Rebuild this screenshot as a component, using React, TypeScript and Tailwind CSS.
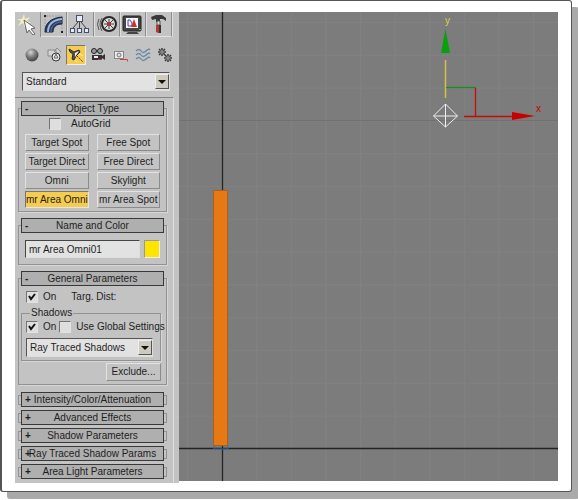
import React from "react";

const lightTypes = [
  "Target Spot",
  "Free Spot",
  "Target Direct",
  "Free Direct",
  "Omni",
  "Skylight",
  "mr Area Omni",
  "mr Area Spot",
];

const closedRollouts = [
  "Intensity/Color/Attenuation",
  "Advanced Effects",
  "Shadow Parameters",
  "Ray Traced Shadow Params",
  "Area Light Parameters",
];

const tabs = [
  {
    name: "Create",
    icon: (
      <>
        <path d="M7 0 8 5 13 3 10 7 14 9 9 9 8 14 6 9 1 12 4 7 0 5 5 5Z" fill="#f3efc2" />
        <path d="M7 6 18 14 14 15 18 20 16 21 12 16 10 19Z" fill="#fafafa" stroke="#666" strokeWidth="1" />
      </>
    ),
  },
  {
    name: "Modify",
    icon: (
      <>
        <path d="M2 19V2H19V19" fill="none" stroke="#999" strokeWidth="1" strokeDasharray="2 1" />
        <path d="M2 18C2 9 8 4 19 3V10C13 10 10 13 10 18Z" fill="#2b3f63" stroke="#1b263b" />
        <path d="M5 18C5 10 10 6 19 5" fill="none" stroke="#9db7de" strokeWidth="2" />
        <path d="M8 18C8 12 12 8 19 8" fill="none" stroke="#5877aa" />
        <path d="M1 1h2v2H1zM18 17h2v2h-2z" fill="#222" />
      </>
    ),
  },
  {
    name: "Hierarchy",
    icon: (
      <>
        <path d="M10.500 8V14M9 8 4 14M12 8 17 14" stroke="#444" strokeWidth="1" />
        <g fill="#e8ebf6" stroke="#46506e">
          <rect x="7.500" y="1.500" width="6" height="6" />
          <rect x="1.500" y="14.500" width="4" height="4" />
          <rect x="8.500" y="14.500" width="4" height="4" />
          <rect x="15.500" y="14.500" width="4" height="4" />
        </g>
      </>
    ),
  },
  {
    name: "Motion",
    icon: (
      <>
        <path d="M3 5Q0 10 3 16M6 4Q2 10 6 17" fill="none" stroke="#555" />
        <circle cx="13" cy="10" r="7" fill="#ddd" stroke="#292929" strokeWidth="2" />
        <path d="M13 5V15M8 10H18M9 6 17 14M17 6 9 14" stroke="#444" strokeWidth="1" />
        <circle cx="13" cy="10" r="2" fill="#a82f2f" />
      </>
    ),
  },
  {
    name: "Display",
    icon: (
      <>
        <rect x="1" y="2" width="18" height="15" rx="1" fill="#454545" stroke="#222" />
        <rect x="4" y="4" width="12" height="10" fill="#f5f5ff" />
        <path d="M6 6h2l2 3v3H6Z" fill="none" stroke="#3a4b9b" />
        <path d="M12 5 15 13H9Z" fill="#d43030" />
        <path d="M6 18h9l2 2H4Z" fill="#444" />
        <path d="M17 15h2v1h-2z" fill="#36cc55" />
      </>
    ),
  },
  {
    name: "Utilities",
    icon: (
      <>
        <path d="M3 3 8 1H14L18 4V7L15 5H12V8H8V5L4 6Z" fill="#383838" />
        <path d="M9 7h3v4H9z" fill="#ddd" stroke="#555" strokeWidth="1" />
        <path d="M8 11h5v7q-2 2-5 0Z" fill="#b2392d" />
        <path d="M11 11h2v8h-2z" fill="#333" />
      </>
    ),
  },
];

const categories = [
  {
    name: "Geometry",
    icon: (
      <>
        <defs>
          <radialGradient id="ball" cx="40%" cy="30%" r="65%">
            <stop offset="0" stopColor="#d5d5d5" />
            <stop offset=".5" stopColor="#858585" />
            <stop offset="1" stopColor="#494949" />
          </radialGradient>
        </defs>
        <circle cx="8" cy="8" r="6.500" fill="url(#ball)" />
      </>
    ),
  },
  {
    name: "Shapes",
    icon: (
      <>
        <path d="M2 3h8v6H2zM8 5 11 1 15 5" fill="#d5d5d5" stroke="#888" />
        <circle cx="10" cy="10" r="4" fill="#eee" stroke="#333" />
        <path d="m10 7 2 4H8Z" fill="#ddd" stroke="#666" strokeWidth="1" />
      </>
    ),
  },
  {
    name: "Lights",
    icon: (
      <>
        <path d="M10 6l5 3M5 10l4 5" stroke="#fff2ac" strokeWidth="1" />
        <path d="M1 2 6 5 11 3 12 5 8 9 6 13 4 12 5 7 2 5Z" fill="#555" stroke="#2b2b2b" />
        <path d="m7 6 4-2-4 6Z" fill="#f7f7e4" />
        <path d="m9 9 6 6" stroke="#444" strokeDasharray="2 1" />
      </>
    ),
  },
  {
    name: "Cameras",
    icon: (
      <>
        <circle cx="4" cy="4" r="2.500" fill="#999" stroke="#222" />
        <circle cx="10" cy="4" r="2.500" fill="#999" stroke="#222" />
        <path d="M2 8h10v5H2zM12 9l3-2v6l-3-2Z" fill="#333" />
        <path d="M4 9h4v2H4z" fill="#eee" />
        <path d="M8 12h4v1H8z" fill="#b73535" />
      </>
    ),
  },
  {
    name: "Helpers",
    icon: (
      <>
        <rect x="1.500" y="4.500" width="9" height="7" fill="#eee" stroke="#858585" />
        <circle cx="6" cy="8" r="2" fill="#ddd" stroke="#777" />
        <path d="M7 12.500h7.500v2" fill="none" stroke="#c94343" />
      </>
    ),
  },
  {
    name: "Space Warps",
    icon: (
      <path
        d="M1 4q3-3 5 0t5 0 4-1M1 8q3-3 5 0t5 0 4-1M1 12q3-3 5 0t5 0 4-1"
        fill="none"
        stroke="#6b87a3"
        strokeWidth="1.300"
      />
    ),
  },
  {
    name: "Systems",
    icon: (
      <>
        <g stroke="#383838" strokeWidth="1.500">
          <path d="M5 1v8M1 5h8M2 2l6 6M8 2 2 8" />
          <path d="M11 7v8M7 11h8M8 8l6 6M14 8l-6 6" />
        </g>
        <circle cx="5" cy="5" r="2" fill="#888" />
        <circle cx="11" cy="11" r="2" fill="#888" />
      </>
    ),
  },
];

const Header = ({ sign, title }: { sign: string; title: string }) => (
  <button
    type="button"
    className="grid h-[15px] w-full items-center border border-[#393939] bg-[#afafaf] leading-[13px] text-[#1e1e1e]"
  >
    <span className="col-start-1 row-start-1 pl-[3px] text-left font-bold">{sign}</span>
    <span className="col-start-1 row-start-1 whitespace-nowrap text-center">{title}</span>
  </button>
);

const Rollout = ({ title, children }: { title: string; children: React.ReactNode }) => (
  <section className="border border-[#929292] px-0.5 shadow-[1px_1px_0_#d7d7d7]">
    <div className="-mt-2">
      <Header sign="-" title={title} />
    </div>
    {children}
  </section>
);

const Check = ({ label, checked = false }: { label: string; checked?: boolean }) => (
  <label className="flex items-center gap-[5px] whitespace-nowrap">
    <span className="grid size-3 shrink-0">
      <input
        type="checkbox"
        defaultChecked={checked}
        className="peer col-start-1 row-start-1 size-3 appearance-none border border-[#e2e2e2] border-l-[#747474] border-t-[#747474] bg-[#dedede]"
      />
      <svg
        viewBox="0 0 12 12"
        className="pointer-events-none invisible col-start-1 row-start-1 size-3 peer-checked:visible"
      >
        <path d="m3 5 2 3 4-5" fill="none" stroke="#111" strokeWidth="2" />
      </svg>
    </span>
    {label}
  </label>
);

const DropDown = ({ label, value }: { label: string; value: string }) => (
  <div className="grid h-[19px] border border-[#dedede] border-l-[#555] border-t-[#555] bg-[#e2e2e2]">
    <select
      aria-label={label}
      className="col-start-1 row-start-1 w-full appearance-none bg-transparent pl-[3px] leading-4 outline-none"
    >
      <option>{value}</option>
    </select>
    <span className="pointer-events-none col-start-1 row-start-1 my-px flex w-[14px] items-center justify-center justify-self-end border border-[#eee] border-b-[#555] border-r-[#555] bg-[#cfcabe]">
      <svg viewBox="0 0 8 4" className="h-1 w-2">
        <path d="M0 0h8L4 4Z" fill="#111" />
      </svg>
    </span>
  </div>
);

const CommandPanel = () => (
  <aside className="w-[164px] shrink-0 bg-[#c3c3c3]">
    <nav className="flex h-[25px] pr-[7px]" aria-label="Command panel">
      {tabs.map((tab, idx) => (
        <button
          key={tab.name}
          type="button"
          aria-label={tab.name}
          className={
            idx === 0
              ? "flex flex-1 items-center justify-center border-r border-[#8d8d8d]"
              : "flex flex-1 items-center justify-center border-b border-r border-b-[#e2e2e2] border-r-[#8d8d8d] shadow-[1px_0_0_#dedede]"
          }
        >
          <svg viewBox="0 0 21 21" className="size-[21px]">
            {tab.icon}
          </svg>
        </button>
      ))}
    </nav>

    <div className="mt-2 flex justify-between pl-[7px] pr-1">
      {categories.map((item) => (
        <button
          key={item.name}
          type="button"
          aria-label={item.name}
          className={
            item.name === "Lights"
              ? "flex size-5 items-center justify-center border border-[#eee] border-l-[#777] border-t-[#777] bg-[#f5cc4e]"
              : "flex size-5 items-center justify-center"
          }
        >
          <svg viewBox="0 0 16 16" className="size-4">
            {item.icon}
          </svg>
        </button>
      ))}
    </div>

    <div className="mt-[7px] pl-[7px] pr-[9px]">
      <DropDown label="Light category" value="Standard" />
    </div>

    <div className="mr-[5px] mt-1.5 flex flex-col gap-[13px] border-r border-t border-r-[#dedede] border-t-[#858585] pb-1 pl-[3px] pr-1.5 pt-[10px]">
      <Rollout title="Object Type">
        <label className="flex items-center gap-[10px] pb-[3px] pl-7 pt-px">
          <input
            type="checkbox"
            className="size-3 appearance-none border border-[#e2e2e2] border-l-[#747474] border-t-[#747474] bg-[#dedede]"
          />
          AutoGrid
        </label>
        <div className="grid grid-cols-2 gap-x-2 gap-y-[2px] px-1 pb-[3px]">
          {lightTypes.map((type) => (
            <button
              key={type}
              type="button"
              className={
                type === "mr Area Omni"
                  ? "h-[17px] whitespace-nowrap border border-[#e5e5e5] border-l-[#777] border-t-[#777] bg-[#f5cc4e] leading-[15px]"
                  : "h-[17px] whitespace-nowrap border border-[#8b8b8b] border-l-[#e2e2e2] border-t-[#e2e2e2] leading-[15px]"
              }
            >
              {type}
            </button>
          ))}
        </div>
      </Rollout>

      <Rollout title="Name and Color">
        <div className="flex gap-1 px-1 pb-1.5 pt-[7px]">
          <input
            aria-label="Object name"
            defaultValue="mr Area Omni01"
            className="h-[18px] min-w-0 flex-1 border border-[#dedede] border-l-[#444] border-t-[#444] bg-[#e2e2e2] pl-[3px] outline-none"
          />
          <button
            type="button"
            aria-label="Object color"
            className="h-[18px] w-4 border border-[#eee] border-l-[#999] border-t-[#999] bg-[#ffe400]"
          />
        </div>
      </Rollout>

      <Rollout title="General Parameters">
        <div className="flex items-center gap-[15px] pb-0.5 pl-[5px] pt-1">
          <Check label="On" checked />
          <span>Targ. Dist:</span>
        </div>
        <fieldset className="mr-[3px] min-w-0 border border-[#929292] px-1 pb-[3px] shadow-[1px_1px_0_#d7d7d7]">
          <legend className="ml-1 px-px">Shadows</legend>
          <div className="flex gap-[3px]">
            <Check label="On" checked />
            <Check label="Use Global Settings" />
          </div>
          <div className="mr-[3px] mt-1">
            <DropDown label="Shadow type" value="Ray Traced Shadows" />
          </div>
        </fieldset>
        <div className="flex justify-end pb-[3px] pr-[3px] pt-[2px]">
          <button
            type="button"
            className="h-[18px] w-[55px] border border-[#8b8b8b] border-l-[#e2e2e2] border-t-[#e2e2e2]"
          >
            Exclude...
          </button>
        </div>
      </Rollout>

      <div className="-mt-1.5 flex flex-col gap-[3px]">
        {closedRollouts.map((title) => (
          <div key={title} className="flex items-center">
            <span className="h-[10px] w-[3px] border border-r-0 border-[#929292]" />
            <div className="flex-1">
              <Header sign="+" title={title} />
            </div>
            <span className="h-[10px] w-[3px] border border-l-0 border-[#929292]" />
          </div>
        ))}
      </div>
    </div>
  </aside>
);

const Viewport = () => (
  <main className="mb-[2px] grid min-w-0 flex-1 bg-[#7c7c7c]">
    <svg width="100%" height="100%" role="img" aria-label="Front viewport" className="block">
      <defs>
        <pattern id="grid" x="8" y="10" width="34.6" height="32.8" patternUnits="userSpaceOnUse">
          <path d="M0 .5H35M.5 0V33" stroke="#818181" />
        </pattern>
      </defs>
      <rect width="100%" height="100%" fill="url(#grid)" />
      <path d="M0 108.500H2000" stroke="#717171" />
      <path d="M0 436.500H2000M43.500 0V2000" stroke="#232323" strokeWidth="1.300" />
      <path d="M35 434v3h14v-3" fill="none" stroke="#3c66a0" />
      <rect x="34.500" y="178.500" width="14" height="255" fill="#e77915" stroke="#a66224" />

      {/* Move gizmo */}
      <path d="M266.500 86V48" stroke="#d6c33c" strokeWidth="1.500" />
      <path d="M262 41h9l-4.500-24Z" fill="#08a00b" />
      <path d="M267 75.500h30" stroke="#159315" strokeWidth="1.300" />
      <path d="M296.500 76v29M285 104.500h50" stroke="#c60b0b" strokeWidth="1.300" />
      <path d="M333 100v8l23-4Z" fill="#c90000" />
      <path d="m266.500 92 12 12-12 11-12-11ZM266.500 92v23M254.500 104h24" fill="none" stroke="#eee" />
      <text x="266" y="12" fill="#dfcf4c" fontSize="10">y</text>
      <text x="357" y="100" fill="#c90000" fontSize="10">x</text>
    </svg>
  </main>
);

const App = () => {
  return (
    <div className="bg-white pb-2 pr-[6px] font-['Liberation_Sans',Arial,sans-serif] text-[10px] leading-[14px] text-[#1e1e1e]">
      <div className="flex rounded-[3px] border border-l-2 border-[#555] bg-white pb-2 pl-[13px] pr-[13px] pt-[11px] shadow-[7px_7px_0_#aaa]">
        <CommandPanel />
        <Viewport />
      </div>
    </div>
  );
};

export default App;
